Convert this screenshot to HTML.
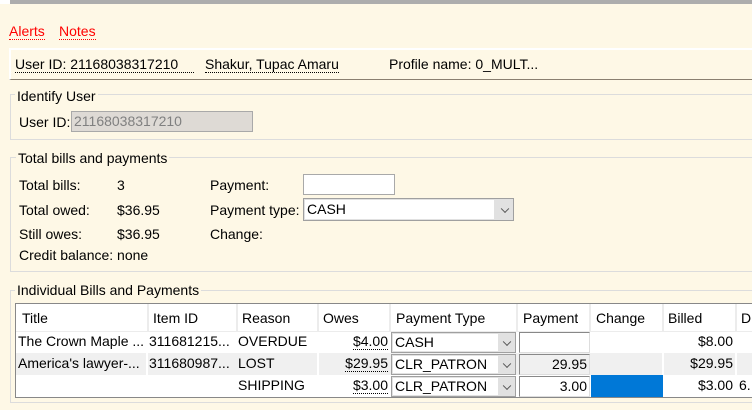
<!DOCTYPE html>
<html><head><style>
*{margin:0;padding:0;box-sizing:border-box}
body{width:752px;height:410px;overflow:hidden;background:#fef8e6;font-family:"Liberation Sans",sans-serif;font-size:14px;color:#000;position:relative}
.a{position:absolute;white-space:nowrap;line-height:15px}
.u{border-bottom:1px dotted #000}
.fs{position:absolute;border:1px solid #dcdcdc;border-right:none}
.lg{position:absolute;background:#fef8e6;padding:0 2px;line-height:15px}
.sel{position:absolute;background:#e1e1e1;border:1px solid #a0a0a0}
.sel .in{position:absolute;left:1px;top:1px;bottom:1px;background:#fff;padding-left:2px;line-height:18px}
.chev{position:absolute;right:5px;top:50%;width:6px;height:6px;border-right:1px solid #555;border-bottom:1px solid #555;transform:translateY(-70%) rotate(45deg)}
.cell{position:absolute;line-height:21px;white-space:nowrap;overflow:hidden}
.pi{position:absolute;border:1px solid #888;border-right-color:#ddd;border-bottom-color:#ddd;text-align:right;padding-right:2px;line-height:18px}
</style></head><body>
<div style="position:absolute;left:0;top:0;width:752px;height:4px;background:#adadad"></div>
<div style="position:absolute;left:0;top:0;width:10px;height:4px;background:#fff"></div>

<div class="a" style="left:9px;top:24px;color:#f00;border-bottom:1px dotted #f00">Alerts</div>
<div class="a" style="left:59px;top:24px;color:#f00;border-bottom:1px dotted #f00">Notes</div>

<div style="position:absolute;left:9px;top:48px;width:743px;height:32px;border-top:2px solid #fff;border-left:2px solid #fff;border-bottom:1px solid #8a7f70"></div>
<div class="a u" style="left:15px;top:57px">User ID: 21168038317210&nbsp;&nbsp;&nbsp;&nbsp;</div>
<div class="a u" style="left:205px;top:57px">Shakur, Tupac Amaru</div>
<div class="a" style="left:389px;top:57px">Profile name: 0_MULT...</div>

<div class="fs" style="left:10px;top:94px;width:742px;height:46px"></div>
<div class="lg" style="left:15px;top:89px">Identify User</div>
<div class="a" style="left:19px;top:115px">User ID:</div>
<div style="position:absolute;left:71px;top:111px;width:182px;height:21px;background:#dedad5;border:1px solid #a9a9a9;color:#808080;line-height:19px;padding-left:2px">21168038317210</div>

<div class="fs" style="left:10px;top:157px;width:742px;height:115px"></div>
<div class="lg" style="left:16px;top:151px">Total bills and payments</div>
<div class="a" style="left:19px;top:178px">Total bills:</div><div class="a" style="left:117px;top:178px">3</div>
<div class="a" style="left:19px;top:203px">Total owed:</div><div class="a" style="left:117px;top:203px">$36.95</div>
<div class="a" style="left:19px;top:227px">Still owes:</div><div class="a" style="left:117px;top:227px">$36.95</div>
<div class="a" style="left:19px;top:248px">Credit balance: none</div>
<div class="a" style="left:210px;top:178px">Payment:</div>
<div style="position:absolute;left:303px;top:174px;width:92px;height:21px;background:#fff;border:1px solid #a9a9a9"></div>
<div class="a" style="left:210px;top:203px">Payment type:</div>
<div class="sel" style="left:303px;top:198px;width:211px;height:23px"><div class="in" style="width:189px">CASH</div><div class="chev"></div></div>
<div class="a" style="left:210px;top:227px">Change:</div>

<div class="fs" style="left:10px;top:290px;width:742px;height:113px"></div>
<div class="lg" style="left:15px;top:283px">Individual Bills and Payments</div>

<div style="position:absolute;left:15px;top:303px;width:740px;height:95px;border:1px solid #888;background:#fff;overflow:hidden">
 <div style="position:absolute;left:0;top:49px;width:740px;height:22px;background:#f0f0f0"></div>
 <div style="position:absolute;left:131px;top:0;width:2px;height:27px;background:#ececec"></div>
 <div style="position:absolute;left:220px;top:0;width:2px;height:27px;background:#ececec"></div>
 <div style="position:absolute;left:301px;top:0;width:2px;height:27px;background:#ececec"></div>
 <div style="position:absolute;left:373px;top:0;width:2px;height:27px;background:#ececec"></div>
 <div style="position:absolute;left:500px;top:0;width:2px;height:27px;background:#ececec"></div>
 <div style="position:absolute;left:573px;top:0;width:2px;height:27px;background:#ececec"></div>
 <div style="position:absolute;left:646px;top:0;width:2px;height:27px;background:#ececec"></div>
 <div style="position:absolute;left:719px;top:0;width:2px;height:27px;background:#ececec"></div>
 <div style="position:absolute;left:0;top:27px;width:740px;height:1px;background:#ececec"></div>
 <div class="cell" style="left:6px;top:4px">Title</div>
 <div class="cell" style="left:137px;top:4px">Item ID</div>
 <div class="cell" style="left:226px;top:4px">Reason</div>
 <div class="cell" style="left:307px;top:4px">Owes</div>
 <div class="cell" style="left:380px;top:4px">Payment Type</div>
 <div class="cell" style="left:507px;top:4px">Payment</div>
 <div class="cell" style="left:580px;top:4px">Change</div>
 <div class="cell" style="left:652px;top:4px">Billed</div>
 <div class="cell" style="left:725px;top:4px">D</div>

 <div class="cell" style="left:2px;top:27px;width:128px">The Crown Maple ...</div>
 <div class="cell" style="left:133px;top:27px;width:88px">311681215...</div>
 <div class="cell" style="left:222px;top:27px">OVERDUE</div>
 <div class="cell" style="left:301px;top:27px;width:71px;text-align:right"><span class="u">$4.00</span></div>
 <div class="cell" style="left:648px;top:27px;width:69px;text-align:right">$8.00</div>

 <div class="cell" style="left:2px;top:49px;width:128px">America's lawyer-...</div>
 <div class="cell" style="left:133px;top:49px;width:88px">311680987...</div>
 <div class="cell" style="left:222px;top:49px">LOST</div>
 <div class="cell" style="left:301px;top:49px;width:71px;text-align:right"><span class="u">$29.95</span></div>
 <div class="cell" style="left:648px;top:49px;width:69px;text-align:right">$29.95</div>
 <div style="position:absolute;left:646px;top:49px;width:2px;height:22px;background:#fff"></div>
 <div style="position:absolute;left:719px;top:49px;width:2px;height:22px;background:#fff"></div>
 <div style="position:absolute;left:130px;top:49px;width:2px;height:22px;background:#fff"></div>
 <div style="position:absolute;left:301px;top:49px;width:2px;height:22px;background:#fff"></div>

 <div class="cell" style="left:222px;top:71px">SHIPPING</div>
 <div class="cell" style="left:301px;top:71px;width:71px;text-align:right"><span class="u">$3.00</span></div>
 <div class="cell" style="left:648px;top:71px;width:69px;text-align:right">$3.00</div>
 <div class="cell" style="left:723px;top:71px">6.</div>

 <div class="sel" style="left:375px;top:28px;width:125px;height:21px"><div class="in" style="width:105px;line-height:17px">CASH</div><div class="chev"></div></div>
 <div class="sel" style="left:375px;top:50px;width:125px;height:21px"><div class="in" style="width:105px;line-height:17px">CLR_PATRON</div><div class="chev"></div></div>
 <div class="sel" style="left:375px;top:72px;width:125px;height:21px"><div class="in" style="width:105px;line-height:17px">CLR_PATRON</div><div class="chev"></div></div>

 <div class="pi" style="left:503px;top:28px;width:71px;height:21px;background:#fff"></div>
 <div class="pi" style="left:503px;top:50px;width:71px;height:21px;background:#f0f0f0">29.95</div>
 <div class="pi" style="left:503px;top:72px;width:71px;height:21px;background:#fff">3.00</div>
 <div style="position:absolute;left:575px;top:71px;width:72px;height:22px;background:#0078d7"></div>
</div>
</body></html>
